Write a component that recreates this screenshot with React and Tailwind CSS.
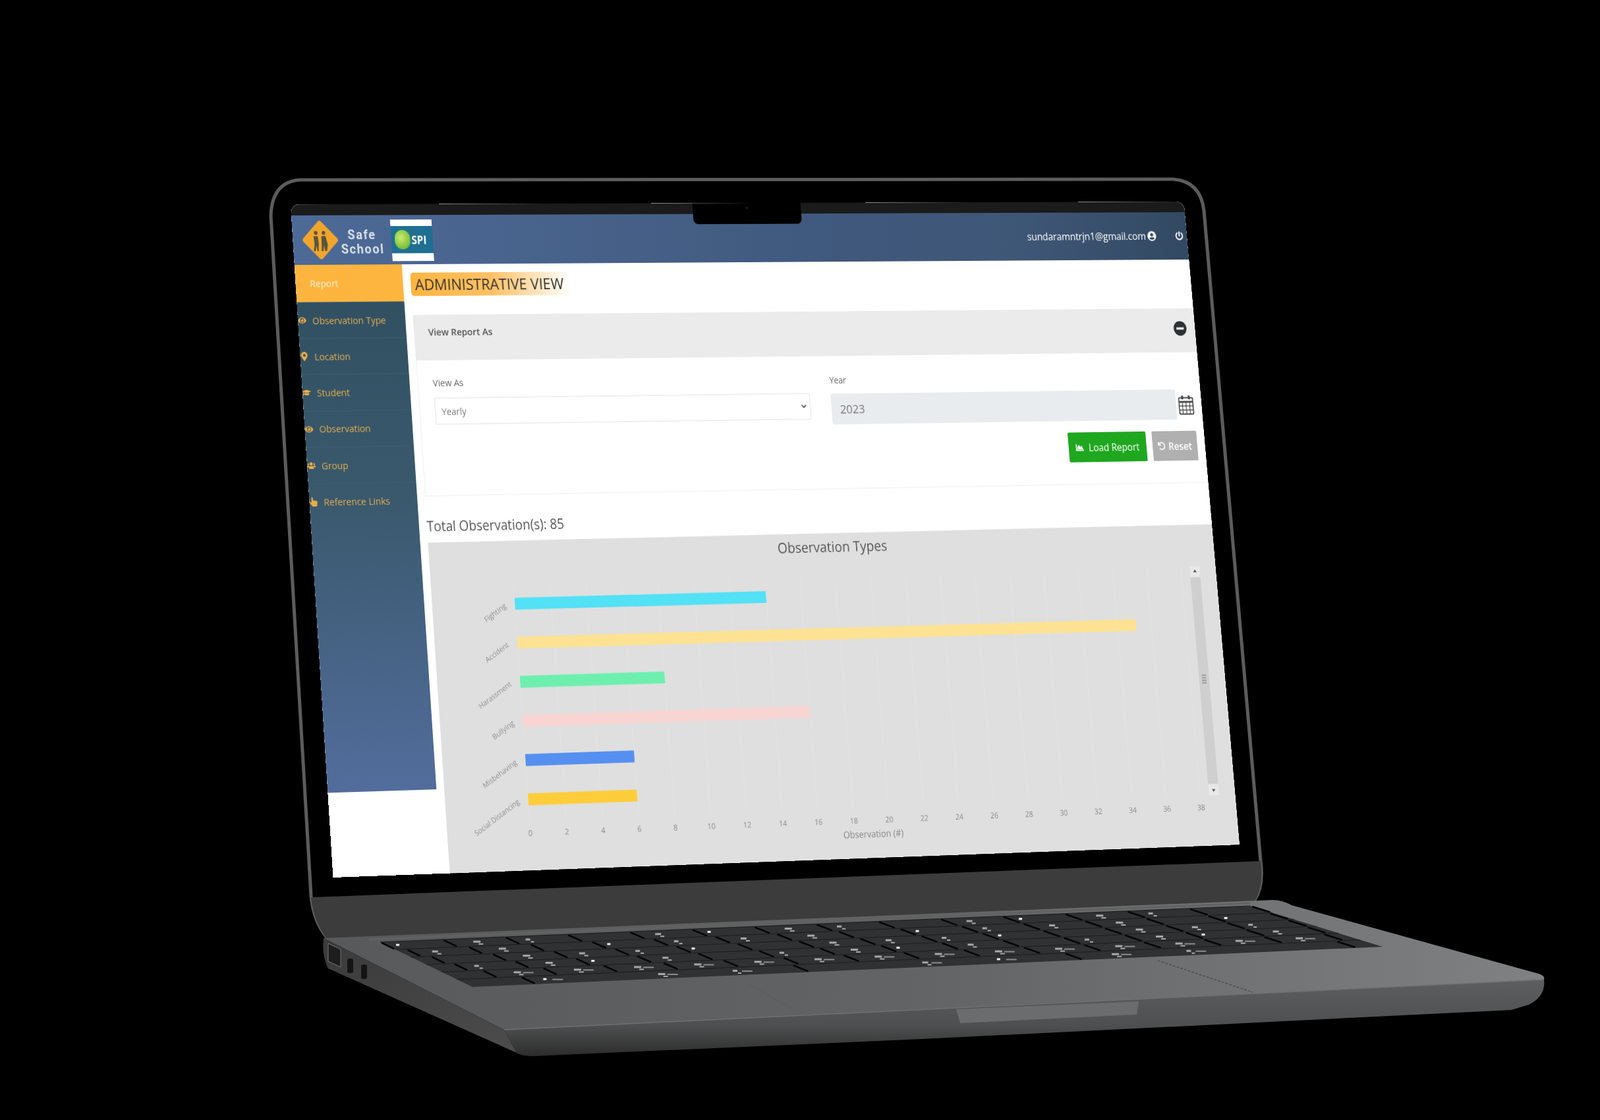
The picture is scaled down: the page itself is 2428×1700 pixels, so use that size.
import React from 'react';
import {
  FaChartArea, FaEye, FaMapMarkerAlt, FaGraduationCap, FaUsers, FaHandPointer,
  FaUserCircle, FaPowerOff, FaMinusCircle, FaUndo, FaChevronDown,
} from 'react-icons/fa';

const SCREEN_W = 1560;
const SCREEN_H = 1017;
// corners of the display in the photo: top left, top right, bottom right, bottom left
const SCREEN_QUAD = [[440.9, 310.2], [1796.6, 306], [1881, 1282], [505.5, 1332]];

// plain homography from the flat page rectangle to the tilted display
const quadToMatrix = (w, h, q) => {
  const [[x0, y0], [x1, y1], [x2, y2], [x3, y3]] = q;
  const dx1 = x1 - x2, dx2 = x3 - x2, sx = x0 - x1 + x2 - x3;
  const dy1 = y1 - y2, dy2 = y3 - y2, sy = y0 - y1 + y2 - y3;
  const det = dx1 * dy2 - dx2 * dy1;
  const g = (sx * dy2 - dx2 * sy) / det;
  const k = (dx1 * sy - sx * dy1) / det;
  const a = x1 - x0 + g * x1, b = x3 - x0 + k * x3;
  const d = y1 - y0 + g * y1, e = y3 - y0 + k * y3;
  return `matrix3d(${[a / w, d / w, 0, g / w, b / h, e / h, 0, k / h, 0, 0, 1, 0, x0, y0, 0, 1].join(',')})`;
};

const navItems = [
  { label: 'Report', Icon: FaChartArea, active: true },
  { label: 'Observation Type', Icon: FaEye },
  { label: 'Location', Icon: FaMapMarkerAlt },
  { label: 'Student', Icon: FaGraduationCap },
  { label: 'Observation', Icon: FaEye },
  { label: 'Group', Icon: FaUsers },
  { label: 'Reference Links', Icon: FaHandPointer },
];

const bars = [
  { label: 'Fighting', value: 14, color: '#52e1f5' },
  { label: 'Accident', value: 35.1, color: '#fde293' },
  { label: 'Harassment', value: 8, color: '#6df0ae' },
  { label: 'Bullying', value: 16, color: '#f8d4d2' },
  { label: 'Misbehaving', value: 6, color: '#5590f0' },
  { label: 'Social Distancing', value: 6, color: '#fdcd3c' },
];

const Logo = () => (
  <svg width="62" height="62" viewBox="0 0 62 62">
    <rect x="9" y="9" width="44" height="44" rx="4" transform="rotate(45 31 31)" fill="#f2a52c" />
    <g fill="#55543f">
      <circle cx="24" cy="20" r="3" />
      <path d="M20 25h7l1 12-1 11h-2l-1-9-2 9h-3l2-11z" />
      <circle cx="37" cy="20" r="3" />
      <path d="M33 25h7l3 13-2 10h-3l-1-9-2 9h-3l1-11z" />
    </g>
  </svg>
);

const SpiLogo = () => (
  <div className="ml-[13px] mt-[7px] flex h-[64px] w-[70px] flex-col self-start bg-white">
    <div className="h-[10px] shrink-0" />
    <div className="flex h-[42px] items-center gap-[2px] bg-[#1f6f92] pl-[6px]">
      <div className="h-[30px] w-[26px] rounded-full bg-[radial-gradient(circle_at_40%_40%,#c9ec6a,#58ac2a)]" />
      <span className="text-[17px] font-bold leading-none text-white">SPI</span>
    </div>
  </div>
);

const Header = () => (
  <header className="relative flex h-[76px] items-center bg-[linear-gradient(90deg,#4d6a97_0%,#47628a_30%,#3f587c_60%,#3f5777_80%,#324962_100%)]">
    <div className="ml-[15px]"><Logo /></div>
    <div className="ml-[3px] mt-[5px] w-[72px] text-center font-['Roboto',sans-serif] text-[20px] font-bold leading-[22px] tracking-[1.8px] text-[#d9e0e9]">
      <div>Safe</div>
      <div>School</div>
    </div>
    <SpiLogo />
    <div className="ml-auto flex items-center pr-[7px] text-white">
      <span className="text-[16.5px] tracking-[-0.2px]">sundaramntrjn1@gmail.com</span>
      <FaUserCircle className="ml-[3px] h-[16px] w-[16px]" />
      <FaPowerOff className="ml-[35px] h-[14px] w-[14px]" />
    </div>
  </header>
);

const Sidebar = () => (
  <nav className="h-[798px] w-[180px] shrink-0 bg-[linear-gradient(180deg,#2f4f60_0%,#3a596d_45%,#526d9c_100%)]">
    {navItems.map(({ label, Icon, active }) => (
      <div
        key={label}
        className={`flex items-center gap-[10px] text-[15px] ${
          active
            ? 'h-[57px] bg-[#fdb53f] text-[#fff3d8]'
            : 'h-[55.2px] border-t border-[#3c5d72] text-[#e6ac4d]'
        }`}
      >
        <Icon className="h-[14px] w-[14px] shrink-0 text-[#f5b042]" />
        <span>{label}</span>
      </div>
    ))}
  </nav>
);

const BarChart = () => {
  const x0 = 139;
  const unit = 30.66;
  const ticks = Array.from({ length: 20 }, (_, i) => i * 2);
  return (
    <svg width="1367" height="505" viewBox="0 0 1367 505" className="block">
      {ticks.map((t) => (
        <line key={t} x1={x0 + t * unit} x2={x0 + t * unit} y1="66" y2="425" stroke="#e4e4e4" strokeWidth="1" />
      ))}
      <text x="690" y="29" textAnchor="middle" fontSize="22" fill="#555">Observation Types</text>
      {bars.map((b, i) => {
        const y = 87 + i * 59.2;
        return (
          <g key={b.label}>
            <rect x={x0} y={y} width={b.value * unit} height="18" fill={b.color} />
            <text
              x={x0 - 14}
              y={y + 14}
              textAnchor="end"
              fontSize="11.5"
              fill="#8c8c8c"
              transform={`rotate(-32 ${x0 - 14} ${y + 14})`}
            >
              {b.label}
            </text>
          </g>
        );
      })}
      {ticks.map((t) => (
        <text key={t} x={x0 + t * unit} y="447" textAnchor="middle" fontSize="12" fill="#858585">{t}</text>
      ))}
      <text x="723" y="469" textAnchor="middle" fontSize="14.5" fill="#858585">Observation (#)</text>
      {/* scroll bar of the chart */}
      <rect x="1320" y="65" width="18" height="360" fill="#cfcfcf" />
      <rect x="1320" y="65" width="18" height="18" fill="#e8e8e8" />
      <rect x="1320" y="407" width="18" height="18" fill="#e8e8e8" />
      <path d="M1329 71l3 4h-6z" fill="#444" />
      <path d="M1329 419l3-4h-6z" fill="#444" />
      <path d="M1325 237h8M1325 241h8M1325 245h8M1325 249h8" stroke="#888" strokeWidth="1.5" />
    </svg>
  );
};

const CalendarIcon = () => (
  <svg width="28" height="33" viewBox="0 0 28 33" className="ml-[4px] shrink-0" fill="none" stroke="#4a4a4a">
    <rect x="1.5" y="5.5" width="25" height="26" rx="2" strokeWidth="2" />
    <path d="M1.5 12h25" strokeWidth="3" />
    <path d="M8 2v6M20 2v6" strokeWidth="3.5" />
    <path d="M1.5 18.5h25M1.5 25h25M7.5 12v19M14 12v19M20.5 12v19" strokeWidth="1.4" />
  </svg>
);

const Main = () => (
  <main className="min-w-0 flex-1 bg-white pl-[13px] text-[#333]">
    <div className="mt-[13px] flex h-[36px] w-[272px] items-center rounded-[5px] bg-[linear-gradient(90deg,#fdb53f_0%,#fdc164_50%,#ffffff_100%)] pl-[7px] text-[24px] whitespace-nowrap">
      ADMINISTRATIVE VIEW
    </div>

    <div className="mt-[29px] flex h-[70px] items-start justify-between bg-[#ebebeb] pl-[24px] pr-[15px] text-[15px] font-semibold text-[#555]">
      <span className="mt-[15px]">View Report As</span>
      <FaMinusCircle className="mt-[20px] h-[24px] w-[24px] text-[#2c3136]" />
    </div>

    <section className="h-[208px] border-b-2 border-l-2 border-[#f6f6f6] pl-[24px] pr-[14px] pt-[25px]">
      <div className="flex">
        <div className="w-[646px]">
          <label className="block h-[20px] text-[14.5px] leading-[20px] text-[#666]">View As</label>
          <div className="mt-[12px] flex h-[42px] items-center justify-between rounded-[3px] border-2 border-[#f0f0f0] bg-white pl-[10px] pr-[5px] text-[14.5px] text-[#777]">
            <span className="mt-[1px]">Yearly</span>
            <FaChevronDown className="h-[10px] w-[10px] text-[#444]" />
          </div>
        </div>
        <div className="ml-[36px] flex-1">
          <label className="mt-[3px] block h-[20px] text-[14px] leading-[20px] text-[#666]">Year</label>
          <div className="mt-[11px] flex items-center">
            <div className="flex h-[48px] w-[614px] items-center rounded-[3px] bg-[#e9ecef] pl-[15px] text-[19px] text-[#777]">2023</div>
            <CalendarIcon />
          </div>
        </div>
      </div>
      <div className="mt-[18px] flex justify-end gap-[11px]">
        <button className="flex h-[47px] w-[140px] items-center justify-center gap-[9px] rounded-[2px] bg-[#1fa71f] text-[16px] font-medium text-white">
          <FaChartArea className="h-[14px] w-[14px]" /> Load Report
        </button>
        <button className="flex h-[47px] w-[81px] items-center justify-center gap-[6px] rounded-[2px] bg-[#b0b0b0] text-[16px] font-semibold text-white">
          <FaUndo className="h-[13px] w-[13px]" /> Reset
        </button>
      </div>
    </section>

    <div className="mt-[33px] mb-[13px] h-[24px] text-[21px] leading-[24px] whitespace-nowrap text-[#555]">Total Observation(s): 85</div>
    {/* the chart runs a touch steeper than the page edge in the photo */}
    <div className="h-[505px] origin-top-left -skew-y-[0.19deg] bg-[#dfdfdf]">
      <BarChart />
    </div>
  </main>
);

const Screen = () => (
  <div
    className="absolute top-0 left-0 h-[1017px] w-[1560px] origin-top-left overflow-hidden rounded-t-[14px] bg-white"
    style={{ transform: quadToMatrix(SCREEN_W, SCREEN_H, SCREEN_QUAD) }}
  >
    <div className="h-full blur-[0.7px] font-['Open_Sans',sans-serif]">
      <div className="h-[17px] bg-[#1b1b1b]" />
      <Header />
      <div className="flex">
        <Sidebar />
        <Main />
      </div>
    </div>
    <div className="absolute top-0 left-[684px] flex h-[33px] w-[189px] justify-center rounded-b-[8px] bg-black pt-[6px]">
      <div className="h-[3px] w-[3px] rounded-full bg-[#2a2a33]" />
    </div>
  </div>
);

// keyboard block: points are placed by bilinear lookup between its four corners
const KB = { bl: [577, 1430], br: [1897, 1375], fr: [2098, 1437], fl: [717, 1498] };
const kbPoint = (u, v) => {
  const tx = KB.bl[0] + (KB.br[0] - KB.bl[0]) * u;
  const ty = KB.bl[1] + (KB.br[1] - KB.bl[1]) * u;
  const bx = KB.fl[0] + (KB.fr[0] - KB.fl[0]) * u;
  const by = KB.fl[1] + (KB.fr[1] - KB.fl[1]) * u;
  return [tx + (bx - tx) * v, ty + (by - ty) * v];
};

const Keyboard = () => {
  const rows = 6;
  const seps = [];
  const specks = [];
  for (let r = 0; r < rows; r++) {
    const v0 = r / rows;
    const v1 = (r + 1) / rows;
    const cols = r === 5 ? 9 : 14;
    const offset = [0, 0.012, 0.022, 0.03, 0.045, 0.07][r];
    for (let c = 0; c <= cols; c++) {
      const u = offset + (c / cols) * (1 - offset * 1.4);
      const [ax, ay] = kbPoint(u, v0 + 0.015);
      const [bx, by] = kbPoint(u, v1 - 0.015);
      if (r < 5 || c % 3 === 0) {
        seps.push(<line key={`s${r}-${c}`} x1={ax} y1={ay} x2={bx} y2={by} stroke="#060606" strokeWidth="2.6" />);
      }
      const h = (r * 7 + c * 13 + r * c * 3) % 5;
      if (h !== 4 && c < cols) {
        const [sx, sy] = kbPoint(u + (0.18 + h * 0.08) / cols, v0 + 0.05);
        specks.push(
          <g key={`k${r}-${c}`} fill={h === 0 ? '#efefef' : '#a8a8a8'}>
            <rect x={sx} y={sy} width={5 + h * 2} height="3" />
            {h > 0 && <rect x={sx + 8} y={sy + 4} width={4 + h} height="2" />}
            {r >= 4 && <rect x={sx + 14} y={sy + 1} width="16" height="2" fill="#8c8c8c" />}
          </g>
        );
      }
    }
    const [hx0, hy0] = kbPoint(0, v0);
    const [hx1, hy1] = kbPoint(1, v0);
    seps.push(<line key={`h${r}`} x1={hx0} y1={hy0} x2={hx1} y2={hy1} stroke="#202021" strokeWidth="1.2" />);
  }
  return (
    <g>
      <polygon points="577,1430 1897,1375 2098,1437 717,1498" fill="#303132" />
      <line x1="560" y1="1426" x2="1897" y2="1371" stroke="#626262" strokeWidth="3" />
      {seps}
      {specks}
    </g>
  );
};

const LaptopBody = () => (
  <svg width="2428" height="1700" viewBox="0 0 2428 1700" className="absolute top-0 left-0">
    <defs>
      <linearGradient id="deck" x1="0" y1="0" x2="1" y2="0">
        <stop offset="0" stopColor="#58595a" />
        <stop offset="0.5" stopColor="#636465" />
        <stop offset="1" stopColor="#7f8182" />
      </linearGradient>
      <linearGradient id="front" x1="0" y1="0" x2="0" y2="1">
        <stop offset="0" stopColor="#5c5e60" />
        <stop offset="0.6" stopColor="#4e4f50" />
        <stop offset="1" stopColor="#2c2c2c" />
      </linearGradient>
      <linearGradient id="side" x1="0" y1="0" x2="1" y2="1">
        <stop offset="0" stopColor="#3a3a3a" />
        <stop offset="1" stopColor="#4c4c4c" />
      </linearGradient>
    </defs>

    {/* lid */}
    <path
      d="M411 327 Q413 276 455 273 L1780 272 Q1822 275 1827 320 L1913 1307 Q1918 1345 1904 1366 L497 1424 Q476 1400 472 1360 Z"
      fill="#000"
      stroke="#5c5c5c"
      strokeWidth="5"
    />
    <path d="M472 1362 L1913 1307 Q1918 1345 1904 1368 L497 1426 Q476 1400 472 1362 Z" fill="#3c3c3c" />

    {/* base */}
    <path d="M491 1424 L1932 1366 Q1945 1366 1960 1374 L2335 1478 Q2345 1481 2343 1487 L765 1563 Z" fill="url(#deck)" />
    <path
      d="M765 1563 L2343 1487 Q2346 1512 2320 1525 L2293 1533 L1400 1577 L810 1603 Q790 1603 784 1598 Z"
      fill="url(#front)"
    />
    <line x1="765" y1="1563" x2="2343" y2="1487" stroke="#6f7071" strokeWidth="1.5" />
    <path d="M491 1424 L765 1563 L784 1598 L498 1470 Q488 1450 491 1424 Z" fill="url(#side)" />

    {/* ports */}
    <polygon points="498,1432 517,1441 517,1468 498,1459" fill="#1d1d1d" stroke="#777" strokeWidth="1" />
    <rect x="527" y="1455" width="9" height="22" rx="3" fill="#141414" />
    <rect x="548" y="1464" width="9" height="22" rx="3" fill="#141414" />

    <Keyboard />

    {/* trackpad edges and thumb notch */}
    <line x1="1757" y1="1458" x2="1901" y2="1506" stroke="#474849" strokeWidth="1.2" strokeDasharray="4 2" />
    <line x1="1135" y1="1493" x2="1200" y2="1530" stroke="#5a5b5c" strokeWidth="1" />
    <path d="M1451 1532 L1728 1520 L1725 1540 L1457 1553 Z" fill="#6a6c6e" />
  </svg>
);

export default function App() {
  return (
    <div className="relative h-[1700px] w-[2428px] overflow-hidden bg-black">
      <LaptopBody />
      <Screen />
    </div>
  );
}
